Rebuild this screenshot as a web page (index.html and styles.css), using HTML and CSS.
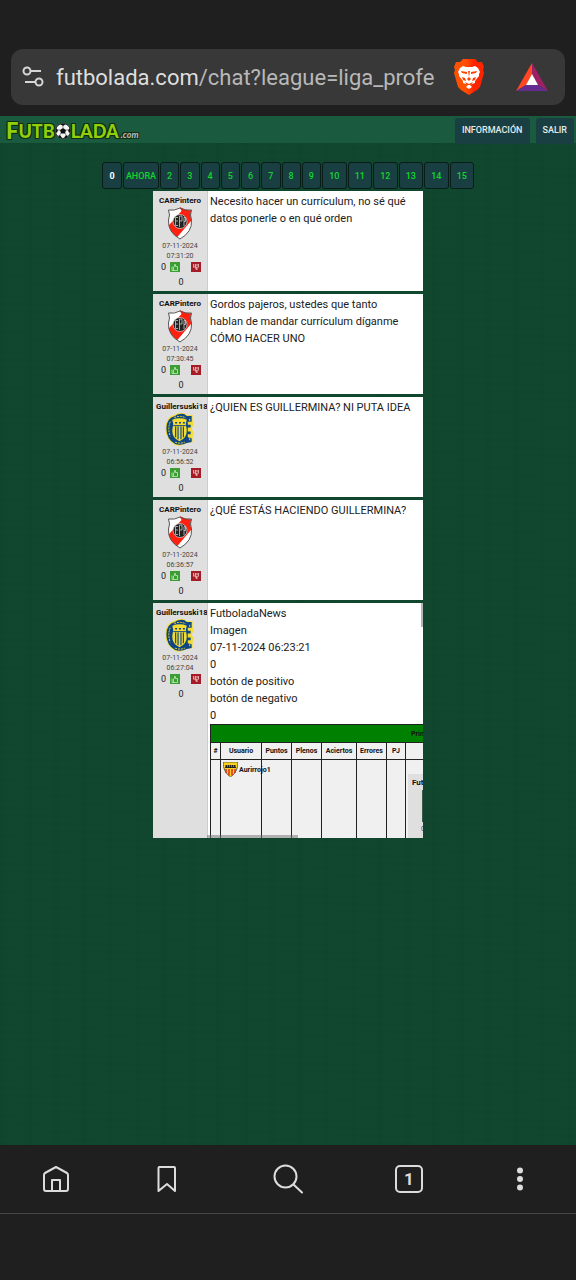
FILE: index.html
```html
<!DOCTYPE html>
<html lang="es">
<head>
<meta charset="utf-8">
<meta name="viewport" content="width=device-width, initial-scale=1">
<title>Futbolada</title>
<link rel="stylesheet" href="styles.css">
</head>
<body>
<svg class="defs" aria-hidden="true">
  <defs>
    <linearGradient id="braveFill" x1="0" x2="1"><stop offset=".4" stop-color="#ff5000"/><stop offset=".65" stop-color="#ff2400"/></linearGradient>
    <clipPath id="riverClip"><path d="M2 3Q8 4 13.500 0Q19 4 25 3Q23 8 25 13Q26 25 13.500 32Q1 25 2 13Q4 8 2 3Z"/></clipPath>
    <symbol id="river" viewBox="0 0 27 33">
      <g clip-path="url(#riverClip)"><path fill="#fff" d="M0 0h27v33H0z"/><path fill="#ff2010" d="M13 0h14v11L10 31l-10-3v-7L15 4z"/></g>
      <path fill="none" stroke="#555" stroke-width="1" d="M2 3Q8 4 13.500 1Q19 4 25 3Q23 8 25 13Q26 25 13.500 32Q1 25 2 13Q4 8 2 3Z"/>
      <circle cx="13.500" cy="14.500" r="7" fill="#222" stroke="#ddd" stroke-width=".7"/>
      <path fill="none" stroke="#ccc" stroke-width=".8" d="M11.500 10.500H9v8h2.500M9 14h2.500M13 20V9h2.500v5H13M17.500 19v-8.500h1.500v4h-1.500"/>
    </symbol>
    <symbol id="central" viewBox="0 0 30 34">
      <path fill="#f4dc32" d="M15 0q4-1 7 2l6 0v6l1 4-2 4 2 4-1 4v6l-6 1q-6 4-12 2Q0 28 0 16T9 2q3-2 6-2z"/>
      <path fill="#0d4682" d="M15 1q4-1 7 2l5 0v6l-4 0v3h3v3h-3v4h3v3h-3v3l4 1v4l-5 1q-6 3-12 1Q1 27 1 16T10 3q2-2 5-2z"/>
      <path fill="#f4dc32" d="M7 7q8-3 15 0l-1 4 1 7q0 8-7.500 11Q7 26 7 18l1-7z"/>
      <path stroke="#0d4682" stroke-width="1.200" d="M10.500 14v11M13 14v13M16 14v13M18.500 14v11"/>
      <path fill="none" stroke="#0d4682" d="M8 13h13"/><path fill="none" stroke="#0d4682" stroke-width="1.500" stroke-dasharray="2 2" d="M10 10h10"/>
      <path fill="none" stroke="#f4dc32" stroke-dasharray="2 1" d="M5 9Q2 16 5 24M9 5q6-3 12 0M10 30q5 2 10 0M25 6v2M25 26v2"/>
    </symbol>
    <symbol id="up" viewBox="0 0 10 10"><path fill="#3c9d35" d="M0 0h10v10H0z"/><path fill="none" stroke="#b4e3aa" stroke-width=".9" d="M2 4.500v4h5.500v-4H5.500v-2H4.500v2L3.500 5v3"/></symbol>
    <symbol id="down" viewBox="0 0 10 10"><path fill="#a51c26" d="M0 0h10v10H0z"/><path fill="#e3a5aa" d="M2 2h6v3.500H6.500v2.500H5L4 5.500H2z"/><path stroke="#a51c26" stroke-width=".8" d="M3.500 2v2.500M5 3h2M5 4.500h2"/></symbol>
  </defs>
</svg>

<header class="browser-top">
  <div class="address">
    <button class="icon-btn site-info" aria-label="Información del sitio">
      <svg width="22" height="22" viewBox="0 0 22 22" fill="none" stroke="#d6d6d6" stroke-width="2"><circle cx="5" cy="5" r="3.500"/><path d="M9 5h10M3 16h10"/><circle cx="17" cy="16" r="3.500"/></svg>
    </button>
    <button class="url"><span class="host">futbolada.com</span>/chat?league=liga_profe</button>
    <button class="icon-btn brave" aria-label="Brave Shields">
      <svg width="30" height="36" viewBox="0 0 30 36"><path fill="url(#braveFill)" d="M9 0h12l3 3 4 0 2 5-1 3 1 3-4 14-3 3-8 5-8-5-3-3L0 14l1-3-1-3 2-5h4z"/>
      <path fill="#fff" d="M9 7l3 1h6l3-1 3 2 2 4-1 2 0 2-4 5 0 2-3 1-2 1 2 2-3 2-3-2 2-2-2-1-3-1 0-2-4-5 0-2-1-2 2-4z"/>
      <path fill="#fb4000" d="M7 12l6 1 0 2-5-1zM23 12l-6 1 0 2 5-1zM14 12h2l-1 6 2 2-2 2-2-2 2-2zM8 18l3 1 1 3-3-1zM22 18l-3 1-1 3 3-1zM11 23l4 2 4-2-2 3h-4z"/></svg>
    </button>
    <button class="icon-btn bat" aria-label="Brave Rewards">
      <svg width="32" height="28" viewBox="0 0 32 28"><path fill="#ff4724" d="M16 0v12l-6 10L0 28z"/><path fill="#9e1f63" d="M16 0l16 28-10-6-6-10z"/><path fill="#662d91" d="M0 28l10-6h12l10 6z"/><path fill="#fff" d="M16 11l6 11H10z"/></svg>
    </button>
  </div>
</header>

<div class="site">
  <header class="site-header">
    <a class="logo" href="#"><span class="cap">F</span><span>UTB</span><svg width="16" height="16" viewBox="0 0 16 16"><circle cx="8" cy="8" r="7.500" fill="#f5f5f5" stroke="#333"/><path fill="#111" d="M8 5l3 2-1 3.500H6L5 7zM5 1h6L8 3zM1 5l2 2-1 3-1-1zM15 5l-2 2 1 3 1-1zM3 13l2-1 2 3-2 0zM13 13l-2-1-2 3 2 0z"/><path stroke="#555" stroke-width=".7" d="M8 3v2M3 7h2M11 7h2M6 10l-1 2M10 10l1 2"/></svg><span>LADA</span><span class="tld">.com</span></a>
    <nav class="site-nav"><a href="#">INFORMACIÓN</a><a href="#">SALIR</a></nav>
  </header>

  <main class="chat">
    <nav class="pages" aria-label="Páginas">
      <button class="current">0</button><button>AHORA</button><button>2</button><button>3</button><button>4</button><button>5</button><button>6</button><button>7</button><button>8</button><button>9</button><button>10</button><button>11</button><button>12</button><button>13</button><button>14</button><button>15</button>
    </nav>

    <section class="messages">
      <article class="message">
        <div class="user"><div class="name">CARPintero</div><svg class="crest"><use href="#river"/></svg><time>07-11-2024 07:31:20</time>
          <div class="votes"><span>0</span><button aria-label="Positivo"><svg><use href="#up"/></svg></button><button aria-label="Negativo"><svg><use href="#down"/></svg></button></div><div class="total">0</div></div>
        <div class="body"><p>Necesito hacer un currículum, no sé qué<br>datos ponerle o en qué orden</p></div>
      </article>
      <article class="message">
        <div class="user"><div class="name">CARPintero</div><svg class="crest"><use href="#river"/></svg><time>07-11-2024 07:30:45</time>
          <div class="votes"><span>0</span><button aria-label="Positivo"><svg><use href="#up"/></svg></button><button aria-label="Negativo"><svg><use href="#down"/></svg></button></div><div class="total">0</div></div>
        <div class="body"><p>Gordos pajeros, ustedes que tanto<br>hablan de mandar currículum díganme<br>CÓMO HACER UNO</p></div>
      </article>
      <article class="message">
        <div class="user"><div class="name">Guillersuski18</div><svg class="crest"><use href="#central"/></svg><time>07-11-2024 06:56:52</time>
          <div class="votes"><span>0</span><button aria-label="Positivo"><svg><use href="#up"/></svg></button><button aria-label="Negativo"><svg><use href="#down"/></svg></button></div><div class="total">0</div></div>
        <div class="body"><p>¿QUIEN ES GUILLERMINA? NI PUTA IDEA</p></div>
      </article>
      <article class="message">
        <div class="user"><div class="name">CARPintero</div><svg class="crest"><use href="#river"/></svg><time>07-11-2024 06:36:57</time>
          <div class="votes"><span>0</span><button aria-label="Positivo"><svg><use href="#up"/></svg></button><button aria-label="Negativo"><svg><use href="#down"/></svg></button></div><div class="total">0</div></div>
        <div class="body"><p>¿QUÉ ESTÁS HACIENDO GUILLERMINA?</p></div>
      </article>
      <article class="message tall">
        <div class="user"><div class="name">Guillersuski18</div><svg class="crest"><use href="#central"/></svg><time>07-11-2024 06:27:04</time>
          <div class="votes"><span>0</span><button aria-label="Positivo"><svg><use href="#up"/></svg></button><button aria-label="Negativo"><svg><use href="#down"/></svg></button></div><div class="total">0</div></div>
        <div class="body">
          <p>FutboladaNews<br>Imagen<br>07-11-2024 06:23:21<br>0<br>botón de positivo<br>botón de negativo<br>0</p>
          <table class="scores">
            <colgroup><col class="c-pos"><col class="c-user"><col class="c-mid"><col class="c-mid"><col class="c-hit"><col class="c-err"><col class="c-pj"><col></colgroup>
            <thead>
              <tr class="title"><th colspan="8">Primera</th></tr>
              <tr class="cols"><th>#</th><th>Usuario</th><th>Puntos</th><th>Plenos</th><th>Aciertos</th><th>Errores</th><th>PJ</th><th></th></tr>
            </thead>
            <tbody>
              <tr><td></td><td><div class="player"><svg width="15" height="15" viewBox="0 0 15 15"><path fill="#f8d21c" stroke="#333" stroke-width=".7" d="M0 0h15q0 10-7.500 15Q0 10 0 0z"/><path stroke="#e02b20" stroke-width="1.500" d="M3 7v4M6 7v6.500M9 7v6.500M12 7v4"/><path fill="#222" d="M2 3h11v3H2z"/><path stroke="#f8d21c" stroke-dasharray="1 1" d="M2 4h11"/></svg><span>Aurirrojo1</span></div></td><td></td><td></td><td></td><td></td><td></td>
                <td><div class="fixture"><b>Futbol</b><span class="shirt"></span><small>0</small></div></td></tr>
            </tbody>
          </table>
        </div>
        <span class="bar-y"></span><span class="bar-x"></span>
      </article>
    </section>
  </main>
</div>

<footer class="browser-bottom">
  <nav class="toolbar">
    <button class="icon-btn" aria-label="Inicio"><svg width="32" height="32" viewBox="0 0 32 32"><path d="M4 26V12q0-1 1-2l11-6 11 6q1 1 1 2v14q0 2-2 2H6q-2 0-2-2zM12 28V17h8v11"/></svg></button>
    <button class="icon-btn" aria-label="Marcadores"><svg width="32" height="32" viewBox="0 0 32 32"><path d="M8 4h15q1 0 1 1v23l-8-7-8.500 7V5z"/></svg></button>
    <button class="icon-btn search" aria-label="Buscar"><svg width="32" height="32" viewBox="0 0 32 32"><circle cx="13.500" cy="13.500" r="11"/><path d="M21.500 21.500l8.500 8"/></svg></button>
    <button class="icon-btn" aria-label="Pestañas"><span class="tabs">1</span></button>
    <button class="icon-btn" aria-label="Menú"><svg class="dots" width="32" height="32" viewBox="0 0 32 32"><circle cx="16" cy="7.500" r="3"/><circle cx="16" cy="16" r="3"/><circle cx="16" cy="24.500" r="3"/></svg></button>
  </nav>
</footer>
</body>
</html>
```
FILE: styles.css
```css
* { box-sizing: border-box; }
body {
  margin: 0;
  min-height: 100vh;
  display: flex;
  flex-direction: column;
  background: #1f1f1f;
  font-family: Roboto, "Noto Sans", sans-serif;
  color: #212121;
}
button { font: inherit; border: 0; padding: 0; background: none; color: inherit; }
a { color: inherit; text-decoration: none; }
p { margin: 0; }
.defs { position: absolute; width: 0; height: 0; }
.icon-btn { display: flex; align-items: center; justify-content: center; }

.browser-top { padding: 49px 11px 11px; }
.address {
  height: 56px;
  display: flex;
  align-items: center;
  padding: 0 17px 0 11px;
  border-radius: 12px;
  background: #383838;
}
.url {
  flex: 1;
  min-width: 0;
  margin: 0 15px 0 12px;
  padding-top: 2px;
  overflow: hidden;
  white-space: nowrap;
  text-align: left;
  font-size: 22px;
  line-height: 32px;
  color: #b8b8b8;
}
.host { color: #dedede; }
.bat { margin-left: 32px; }

.site {
  flex: 1;
  background:
    repeating-linear-gradient(2deg, rgba(0, 0, 0, .02) 0 2px, transparent 2px 7px),
    repeating-linear-gradient(90deg, rgba(0, 60, 30, .06) 0 5px, transparent 5px 27px),
    #11462f;
}
.site-header {
  height: 27px;
  display: flex;
  justify-content: space-between;
  padding: 2px 2px 0 6px;
  background: #1a5a3e;
}
.logo {
  display: flex;
  align-items: center;
  height: 25px;
  font: 900 18px/20px Lato, sans-serif;
  color: #90d00a;
  text-shadow: 1px 1px 0 #122b12, -1px -1px 0 #122b12, 1px -1px 0 #122b12, -1px 1px 0 #122b12;
}
.logo .cap { font-size: 22px; }
.logo .tld { align-self: flex-end; margin-left: 2px; font-size: 9px; line-height: 16px; font-style: italic; color: #b0b8b4; }
.site-nav { display: flex; gap: 6px; }
.site-nav a {
  height: 26px;
  padding: 0 7px;
  border-radius: 3px 3px 0 0;
  background: #193f42;
  color: #e4ecea;
  font-size: 9px;
  font-weight: 500;
  line-height: 25px;
}

.chat { padding: 19px 16px; }
.pages {
  max-width: 372px;
  margin: 0 auto 2px;
  display: grid;
  grid-template-columns: 80fr 144fr repeat(8, 77fr) repeat(6, 98fr);
  gap: 1px;
}
.pages button {
  height: 27px;
  border: 1px solid #061d18;
  border-radius: 3px;
  background: #193f43;
  color: #10d62c;
  font-size: 9px;
  font-weight: 500;
}
.pages .current { color: #fff; font-weight: 700; }

.messages { max-width: 270px; margin: 0 auto; display: grid; gap: 3px; }
.message {
  position: relative;
  height: 100px;
  display: grid;
  grid-template-columns: 55px minmax(0, 1fr);
  background: #fff;
  overflow: hidden;
}
.message.tall { height: 235px; }
.user {
  overflow: hidden;
  padding-top: 5px;
  border-right: 1px solid #c8d0cc;
  background: #dfdfdf;
  text-align: center;
  font-size: 9px;
}
.name { padding: 0 3px; white-space: nowrap; font-size: 8px; line-height: 10px; font-weight: 700; color: #111; }
.crest { display: block; width: 30px; height: 33px; margin: 1px auto; }
.user time { display: block; width: 44px; margin: 0 auto; font-size: 7px; line-height: 10px; color: #444; }
.votes { display: flex; align-items: center; height: 12px; padding-left: 8px; }
.votes button { width: 10px; height: 10px; margin-left: 4px; }
.votes button + button { margin-left: 11px; }
.votes svg { display: block; width: 10px; height: 10px; }
.total { margin-top: 3px; padding-left: 2px; line-height: 12px; }
.body { padding: 2px 0 0 2px; overflow: hidden; }
.body p { font-size: 11px; line-height: 17px; }

.scores {
  width: 427px;
  table-layout: fixed;
  border-collapse: collapse;
  background: #f0f0f0;
  font-size: 7px;
  line-height: 10px;
  color: #111;
}
.scores th, .scores td { padding: 0; border: 1px solid #222; white-space: nowrap; vertical-align: top; }
.scores th { vertical-align: middle; }
.title th { height: 18px; background: #008000; }
.cols th { height: 17px; }
.scores td { height: 100px; }
.c-pos { width: 10px; }
.c-user { width: 41px; }
.c-mid { width: 30px; }
.c-hit { width: 35px; }
.c-err { width: 30px; }
.c-pj { width: 19px; }
.player { display: flex; align-items: center; gap: 1px; padding: 2px; font-weight: 700; }
.player svg { flex: none; }
.fixture { width: 52px; margin: 14px 2px 0; padding: 4px; background: #dfdfdf; }
.fixture b { display: block; font-size: 8px; }
.fixture .shirt { display: block; width: 30px; height: 32px; margin: 2px 0 2px 10px; background: #3c5a4a; }
.fixture small { display: block; padding-left: 9px; font-size: 7px; color: #555; }
.bar-y, .bar-x { position: absolute; background: rgba(110, 110, 110, .5); }
.bar-y { top: 0; right: 0; width: 2px; height: 24px; }
.bar-x { bottom: 0; left: 54px; width: 91px; height: 3px; }

.browser-bottom { padding-bottom: 66px; }
.toolbar {
  height: 69px;
  display: flex;
  justify-content: space-between;
  align-items: center;
  padding: 0 40px;
  border-bottom: 1px solid #484848;
}
.toolbar svg { fill: none; stroke: #dcdcdc; stroke-width: 2; stroke-linejoin: round; stroke-linecap: round; }
.toolbar .icon-btn { width: 32px; }
.toolbar .search { margin: 0 10px; }
.toolbar .dots { fill: #dcdcdc; stroke: none; }
.tabs {
  width: 28px;
  height: 28px;
  border: 2px solid #dcdcdc;
  border-radius: 5px;
  color: #dcdcdc;
  font-size: 17px;
  line-height: 24px;
  font-weight: 700;
}
```
